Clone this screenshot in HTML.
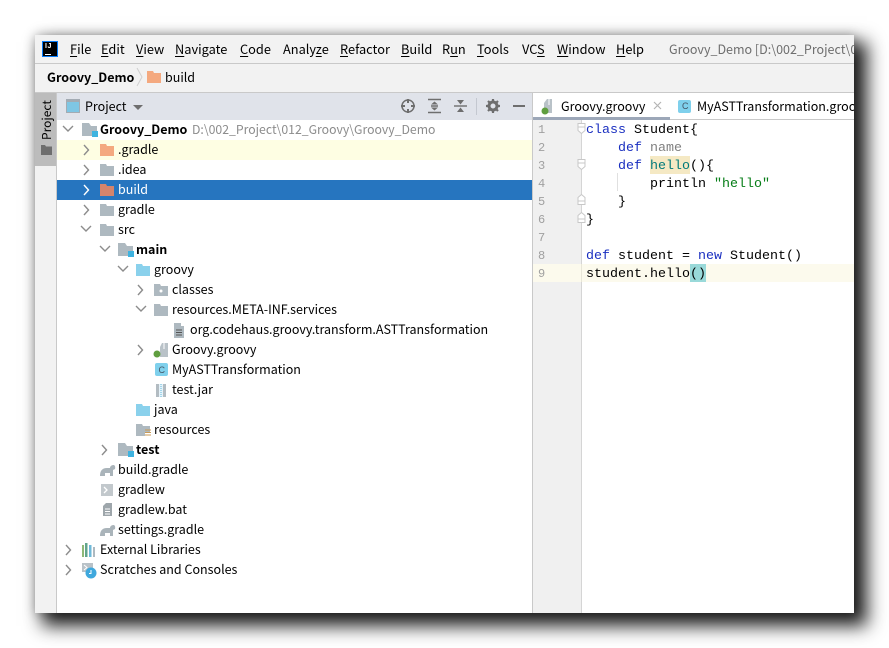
<!DOCTYPE html>
<html><head><meta charset="utf-8">
<style>
html,body{margin:0;padding:0;width:889px;height:648px;background:#fff;overflow:hidden}
*{box-sizing:border-box}
#w{position:absolute;left:35px;top:35px;width:819px;height:578px;background:#fff;box-shadow:10px 10px 17px 3px rgba(0,0,0,.88),0 0 10px rgba(0,0,0,.25)}
.a{position:absolute}
.t{position:absolute;white-space:nowrap;font-family:"Noto Sans CJK SC","Liberation Sans",sans-serif;font-size:12.5px;color:#000;line-height:20px;height:20px}
.r{margin-top:-1px}
.m{top:4px;line-height:20px;font-size:12.8px}
u{text-decoration:underline;text-underline-offset:2px}
.c{position:absolute;white-space:pre;font-family:"Liberation Mono",monospace;font-size:13.33px;line-height:18px;height:18px;color:#000;left:551px;margin-top:2px}
.n{position:absolute;font-family:"Liberation Mono",monospace;font-size:12px;line-height:18px;color:#a0a0a0;left:503px;margin-top:1px}
.k{color:#1a2fc0}
svg{position:absolute;overflow:visible}
</style></head><body>
<div id="w">
<!-- menu -->
<div class="a" style="left:0;top:0;width:819px;height:58px;background:#f2f2f2"></div>
<div class="a" style="left:0;top:28px;width:819px;height:1px;background:#c9c9c9"></div>
<div class="a" style="left:0;top:57px;width:819px;height:1px;background:#c9c9c9"></div>
<div class="a" style="left:7px;top:6px;width:16px;height:16px;background:#000;border:1px solid #087cfa"></div>
<div class="a" style="left:10px;top:8px;color:#fff;font:bold 7px 'Liberation Sans',sans-serif;line-height:7px;letter-spacing:.5px">IJ</div>
<div class="a" style="left:10px;top:19px;width:6px;height:1px;background:#fff"></div>
<div class="t m" style="left:35px"><u>F</u>ile</div>
<div class="t m" style="left:66px"><u>E</u>dit</div>
<div class="t m" style="left:101px"><u>V</u>iew</div>
<div class="t m" style="left:140px"><u>N</u>avigate</div>
<div class="t m" style="left:205px"><u>C</u>ode</div>
<div class="t m" style="left:248px">Analy<u>z</u>e</div>
<div class="t m" style="left:305px"><u>R</u>efactor</div>
<div class="t m" style="left:366px"><u>B</u>uild</div>
<div class="t m" style="left:407px">R<u>u</u>n</div>
<div class="t m" style="left:442px"><u>T</u>ools</div>
<div class="t m" style="left:487px">VC<u>S</u></div>
<div class="t m" style="left:522px"><u>W</u>indow</div>
<div class="t m" style="left:581px"><u>H</u>elp</div>
<div class="t m" style="left:634px;color:#6e6e6e;width:185px;overflow:hidden;font-size:12.5px">Groovy_Demo [D:\002_Project\012_Groovy]</div>
<!-- breadcrumb -->
<div class="t" style="left:12px;top:32px;font-weight:700">Groovy_Demo</div>
<svg style="left:0;top:0" width="10" height="10"><path d="M102 33 L107 42 L102 51" fill="none" stroke="#d0d0d0"/></svg>
<svg style="left:112px;top:36px" width="14" height="12"><path d="M0 0H6L7 2H14V12H0Z" fill="#f4a97f"/></svg>
<div class="t" style="left:130px;top:32px">build</div>
<!-- left strip -->
<div class="a" style="left:0;top:58px;width:22px;height:520px;background:#f2f2f2"></div>
<div class="a" style="left:21px;top:58px;width:1px;height:520px;background:#c9c9c9"></div>
<div class="a" style="left:0;top:58px;width:21px;height:73px;background:#bcbcbc"></div>
<div class="t" style="left:2px;top:105px;height:20px;font-size:12px;transform-origin:0 0;transform:rotate(-90deg)">Project</div>
<svg style="left:6px;top:110px" width="11" height="10"><path d="M0 0H4L5 1.500H11V10H0Z" fill="#6e6e6e"/></svg>
<!-- project header -->
<div class="a" style="left:22px;top:58px;width:475px;height:27px;background:#e0e3ea"></div>
<svg style="left:31px;top:64px" width="14" height="14"><rect x=".5" y=".5" width="13" height="13" fill="#7ec6e4" stroke="#a3abb3"/><rect x="0" y="0" width="14" height="3" fill="#a3abb3"/></svg>
<div class="t r" style="left:50px;top:62px">Project</div>
<svg style="left:98px;top:70px" width="10" height="6"><path d="M0 0H10L5 5Z" fill="#6e6e6e"/></svg>
<svg style="left:366px;top:64px" width="14" height="14" fill="none" stroke="#6e6e6e" stroke-width="1.500"><circle cx="7" cy="7" r="6"/><path d="M7 0V4M7 10V14M0 7H4M10 7H14" stroke-width="2"/></svg>
<svg style="left:393px;top:64px" width="14" height="14"><path d="M0 .5H13M0 13.500H13M3 7H10" stroke="#6e6e6e" stroke-width="1.400"/><path d="M6.500 2.500L10 5.500H3ZM6.500 11.500L3 8.500H10Z" fill="#6e6e6e"/></svg>
<svg style="left:419px;top:64px" width="14" height="14"><path d="M0 7H13" stroke="#6e6e6e" stroke-width="1.400"/><path d="M6.500 5.500L3 1H10ZM6.500 8.500L10 13H3Z" fill="#6e6e6e"/></svg>
<div class="a" style="left:441px;top:63px;width:1px;height:17px;background:#c4c8d0"></div>
<svg style="left:451px;top:64px" width="14" height="14"><circle cx="7" cy="7" r="4" fill="none" stroke="#6e6e6e" stroke-width="3"/><path d="M7 0V3M7 11V14M0 7H3M11 7H14M2 2L4 4M10 10L12 12M12 2L10 4M4 10L2 12" stroke="#6e6e6e" stroke-width="2.200"/></svg>
<div class="a" style="left:478px;top:70px;width:12px;height:2px;background:#6e6e6e"></div>
<!-- tree rows -->
<div class="a" style="left:22px;top:105px;width:475px;height:20px;background:#fefee3"></div>
<div class="a" style="left:22px;top:145px;width:475px;height:20px;background:#2675bf"></div>
<div class="a" style="left:497px;top:58px;width:1px;height:520px;background:#c9c9c9"></div>
<svg style="left:0;top:0" width="819" height="578" fill="none" stroke="#8c8c8c" stroke-width="1.400">
<path d="M28 91l5 5 5-5"/>
<path d="M49 110l4.500 5-4.500 5M49 130l4.500 5-4.500 5"/>
<path d="M49 150l4.500 5-4.500 5" stroke="#fff"/>
<path d="M49 170l4.500 5-4.500 5"/>
<path d="M46 191l5 5 5-5"/>
<path d="M65 211l5 5 5-5"/>
<path d="M83 231l5 5 5-5"/>
<path d="M103 250l4.500 5-4.500 5"/>
<path d="M101 271l5 5 5-5"/>
<path d="M103 310l4.500 5-4.500 5"/>
<path d="M67 410l4.500 5-4.500 5"/>
<path d="M31 510l4.500 5-4.500 5M31 530l4.500 5-4.500 5"/>
</svg>
<!-- folders -->
<svg style="left:0;top:0" width="819" height="578">
<path d="M47 88h7l2 3h6v10H47z" fill="#aeb9c0"/><rect x="57" y="96" width="6" height="6" fill="#3fb3e0"/>
<path d="M65 109h6l1 2h7v10H65z" fill="#f4a97f"/>
<path d="M65 129h6l1 2h7v10H65z" fill="#aeb9c0"/>
<path d="M65 149h6l1 2h7v10H65z" fill="#d4846c"/>
<path d="M65 169h6l1 2h7v10H65z" fill="#aeb9c0"/>
<path d="M65 189h6l1 2h7v10H65z" fill="#aeb9c0"/>
<path d="M83 208h7l2 3h6v10H83z" fill="#aeb9c0"/><rect x="93" y="216" width="6" height="6" fill="#3fb3e0"/>
<path d="M101 229h6l1 2h7v10h-14z" fill="#8ad1ec"/>
<path d="M119 249h6l1 2h7v10h-14z" fill="#aeb9c0"/><circle cx="126" cy="256" r="1.500" fill="#fff"/>
<path d="M119 269h6l1 2h7v10h-14z" fill="#aeb9c0"/>
<path d="M139 288h7v3h3v12h-10z" fill="#aeb9c0"/><path d="M141 295h6M141 297.500h6M141 300h6" stroke="#555" stroke-width="1"/>
<path d="M127 308h6v14h-8v-10z" fill="#b9c2c8"/><path d="M129 308v6" stroke="#fff"/><circle cx="122" cy="319" r="3.500" fill="#5f9e3f"/>
<rect x="120" y="328" width="13" height="13" rx="2" fill="#7fd0ec"/>
<text x="123.500" y="338" font-family="Liberation Sans,sans-serif" font-size="9" fill="#456">C</text>
<rect x="121" y="349" width="10" height="13" fill="#b3bcc2"/><rect x="124" y="349" width="4" height="13" fill="#e6f3fa"/><path d="M126 349v13" stroke="#5fb9dc" stroke-dasharray="1 1"/>
<path d="M101 369h6l1 2h7v10h-14z" fill="#8ad1ec"/>
<path d="M101 389h6l1 2h7v7h-5v3h-9z" fill="#aeb9c0"/><path d="M110 395h6M110 397.500h6M110 400h6" stroke="#c99a55"/>
<path d="M83 408h7l2 3h6v10H83z" fill="#aeb9c0"/><rect x="93" y="416" width="6" height="6" fill="#3fb3e0"/>
<path d="M65 441c0-5 2-8 7-8h3c0-2 2-3 3.500-3 1.500 0 2 2 1.500 4l-2 1v6h-3v-3h-5v3h-3z" fill="#aab4ba"/>
<rect x="66" y="449" width="12" height="12" fill="#c2c8cc"/><path d="M69 452l3 3-3 3" stroke="#fff" stroke-width="1.300" fill="none"/>
<path d="M71 468h6v13h-9v-10z" fill="#9ea6ab"/><path d="M70 474h5M70 476.500h5M70 479h5" stroke="#fff" stroke-width=".9"/>
<path d="M65 501c0-5 2-8 7-8h3c0-2 2-3 3.500-3 1.500 0 2 2 1.500 4l-2 1v6h-3v-3h-5v3h-3z" fill="#aab4ba"/>
<path d="M47 510h2v12h-2z" fill="#8fb977"/><path d="M50 508h2.500v14H50z" fill="#62a58c"/><path d="M54 510h2.500v12H54z" fill="#6fb9d9"/><path d="M58 512h2v10h-2z" fill="#aeb9c0"/>
<path d="M47 528h11v9H47z" fill="#b9c2c8"/><path d="M49 530l3 2.500-3 2.500" stroke="#fff" fill="none"/><circle cx="56" cy="538" r="5.500" fill="#3fa8dd"/><path d="M56 535v3.500h-2" stroke="#fff" fill="none"/>
</svg>
<!-- tree text -->
<div class="t r" style="left:65px;top:85px;font-weight:700">Groovy_Demo</div>
<div class="t r" style="left:157px;top:85px;color:#8c8c8c;font-size:12.25px">D:\002_Project\012_Groovy\Groovy_Demo</div>
<div class="t r" style="left:83px;top:105px">.gradle</div>
<div class="t r" style="left:83px;top:125px">.idea</div>
<div class="t r" style="left:83px;top:145px;color:#fff">build</div>
<div class="t r" style="left:83px;top:165px">gradle</div>
<div class="t r" style="left:83px;top:185px">src</div>
<div class="t r" style="left:101px;top:205px;font-weight:700">main</div>
<div class="t r" style="left:119px;top:225px">groovy</div>
<div class="t r" style="left:137px;top:245px">classes</div>
<div class="t r" style="left:137px;top:265px">resources.META-INF.services</div>
<div class="t r" style="left:155px;top:285px">org.codehaus.groovy.transform.ASTTransformation</div>
<div class="t r" style="left:137px;top:305px">Groovy.groovy</div>
<div class="t r" style="left:137px;top:325px">MyASTTransformation</div>
<div class="t r" style="left:137px;top:345px">test.jar</div>
<div class="t r" style="left:119px;top:365px">java</div>
<div class="t r" style="left:119px;top:385px">resources</div>
<div class="t r" style="left:101px;top:405px;font-weight:700">test</div>
<div class="t r" style="left:83px;top:425px">build.gradle</div>
<div class="t r" style="left:83px;top:445px">gradlew</div>
<div class="t r" style="left:83px;top:465px">gradlew.bat</div>
<div class="t r" style="left:83px;top:485px">settings.gradle</div>
<div class="t r" style="left:65px;top:505px">External Libraries</div>
<div class="t r" style="left:65px;top:525px">Scratches and Consoles</div>
<!-- tabs -->
<div class="a" style="left:498px;top:58px;width:321px;height:27px;background:#f2f2f2"></div>
<div class="a" style="left:498px;top:58px;width:140px;height:27px;background:#fff"></div>
<div class="a" style="left:498px;top:82px;width:137px;height:3px;background:#9ca7b8"></div>
<div class="a" style="left:635px;top:84px;width:184px;height:1px;background:#c9c9c9"></div>
<div class="a" style="left:635px;top:58px;width:184px;height:26px;background:#fff"></div>
<svg style="left:0;top:0" width="819" height="100">
<path d="M512 64h5v14h-8v-10z" fill="#b9c2c8"/><path d="M514 64v6" stroke="#fff"/><circle cx="510" cy="76" r="3.500" fill="#5f9e3f"/>
<path d="M619 67l7 7M626 67l-7 7" stroke="#b5b5b5" stroke-width="1.200"/>
<rect x="643" y="65" width="13" height="13" rx="2" fill="#7fd0ec"/>
</svg>
<div class="a" style="left:647px;top:66px;font:9px 'Liberation Sans',sans-serif;color:#456">C</div>
<div class="t r" style="left:526px;top:62px">Groovy.groovy</div>
<div class="t r" style="left:662px;top:62px;width:157px;overflow:hidden">MyASTTransformation.groovy</div>
<!-- gutter/editor -->
<div class="a" style="left:498px;top:85px;width:48px;height:493px;background:#f0f0f0"></div>
<div class="a" style="left:546px;top:85px;width:1px;height:493px;background:#d5d5d5"></div>
<div class="a" style="left:498px;top:229px;width:321px;height:18px;background:#fcfaed"></div>
<div class="a" style="left:546px;top:229px;width:1px;height:18px;background:#e8e6d8"></div>
<div class="a" style="left:615px;top:121px;width:40px;height:18px;background:#f5e9c4"></div>
<div class="a" style="left:655px;top:229px;width:16px;height:18px;background:#99d9d9"></div>
<div class="a" style="left:586px;top:175px;width:1px;height:18px;background:#e0e0e0;display:none"></div>
<div class="a" style="left:582px;top:138px;width:1px;height:18px;background:#e0e0e0"></div>
<svg style="left:0;top:0" width="819" height="300" fill="#fff" stroke="#c8c8c8">
<path d="M543 88.500h7v7l-3.500 3-3.500-3zM543 92h7"/>
<path d="M543 124.500h7v7l-3.500 3-3.500-3zM543 128h7"/>
<path d="M543 169.500h7v-7l-3.500-3-3.500 3zM543 166h7"/>
<path d="M543 187.500h7v-7l-3.500-3-3.500 3zM543 184h7"/>
</svg>
<div class="n" style="top:85px">1</div><div class="n" style="top:103px">2</div><div class="n" style="top:121px">3</div>
<div class="n" style="top:139px">4</div><div class="n" style="top:157px">5</div><div class="n" style="top:175px">6</div>
<div class="n" style="top:193px">7</div><div class="n" style="top:211px">8</div><div class="n" style="top:229px">9</div>
<div class="c" style="top:85px"><span class="k">class</span> Student{</div>
<div class="c" style="top:103px">    <span class="k">def</span> <span style="color:#808080">name</span></div>
<div class="c" style="top:121px">    <span class="k">def</span> <span style="color:#007a7a">hello</span>(){</div>
<div class="c" style="top:139px">        println <span style="color:#067d17">"hello"</span></div>
<div class="c" style="top:157px">    }</div>
<div class="c" style="top:175px">}</div>
<div class="c" style="top:211px"><span class="k">def</span> student = <span class="k">new</span> Student()</div>
<div class="c" style="top:229px">student.hello()</div>
</div>
</body></html>
